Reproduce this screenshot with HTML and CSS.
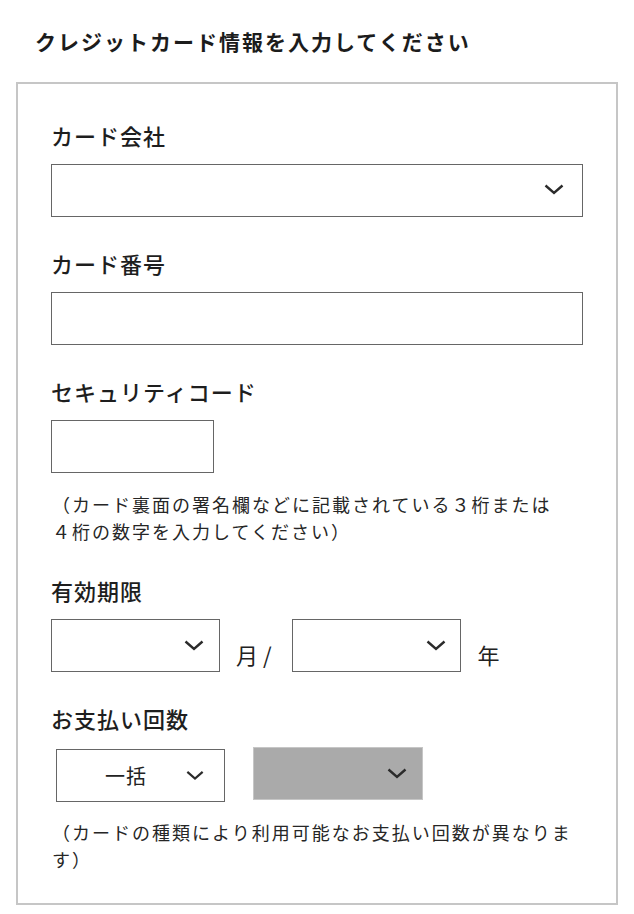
FILE: index.html
```html
<!DOCTYPE html>
<html lang="ja">
<head>
<meta charset="utf-8">
<title>クレジットカード情報</title>
<link rel="stylesheet" href="styles.css">
</head>
<body>
<div class="page">
  <h1 class="title">クレジットカード情報を入力してください</h1>
  <div class="card">
    <div class="field first">
      <div class="label">カード会社</div>
      <div class="select full">
        <svg class="chev chev-full" viewBox="0 0 20 11" width="20" height="11"><polyline points="1.5,1.5 10,9 18.5,1.5"/></svg>
      </div>
    </div>

    <div class="field">
      <div class="label">カード番号</div>
      <div class="input full"></div>
    </div>

    <div class="field">
      <div class="label">セキュリティコード</div>
      <div class="input short"></div>
      <p class="note">（カード裏面の署名欄などに記載されている３桁または<br>４桁の数字を入力してください）</p>
    </div>

    <div class="field expiry">
      <div class="label">有効期限</div>
      <div class="row">
        <div class="select mid">
          <svg class="chev" viewBox="0 0 20 11" width="20" height="11"><polyline points="1.5,1.5 10,9 18.5,1.5"/></svg>
        </div>
        <span class="unit unit-month">月 /</span>
        <div class="select mid">
          <svg class="chev chev-year" viewBox="0 0 20 11" width="20" height="11"><polyline points="1.5,1.5 10,9 18.5,1.5"/></svg>
        </div>
        <span class="unit unit-year">年</span>
      </div>
    </div>

    <div class="field payment">
      <div class="label">お支払い回数</div>
      <div class="row pay-row">
        <div class="select mid pay-once">
          <span class="value">一括</span>
          <svg class="chev chev-pay" viewBox="0 0 20 11" width="20" height="11"><polyline points="1.5,1.5 10,9 18.5,1.5"/></svg>
        </div>
        <div class="select mid disabled">
          <svg class="chev" viewBox="0 0 20 11" width="20" height="11"><polyline points="1.5,1.5 10,9 18.5,1.5"/></svg>
        </div>
      </div>
      <p class="note note-pay">（カードの種類により利用可能なお支払い回数が異なりま<br>す）</p>
    </div>
  </div>
</div>
</body>
</html>
```

FILE: styles.css
```css
* {
  box-sizing: border-box;
}

html, body {
  margin: 0;
  padding: 0;
  background: #ffffff;
}

body {
  font-family: "Noto Sans CJK JP", "Noto Sans", sans-serif;
  color: #222222;
}

.page {
  padding: 26px 16px 0 16px;
  width: 634px;
}

.title {
  margin: 0 0 26px 0;
  padding-left: 19px;
  font-size: 21px;
  line-height: 30px;
  font-weight: 700;
  letter-spacing: 2px;
  color: #1c1c1c;
}

.card {
  width: 602px;
  border: 2px solid #c6c6c6;
  padding: 36px 33px 30px 33px;
}

.field {
  margin-top: 31px;
}

.field.first {
  margin-top: 0;
}

.field.expiry {
  margin-top: 30px;
}

.label {
  font-size: 22px;
  line-height: 30px;
  font-weight: 500;
  letter-spacing: 1px;
  margin-bottom: 14px;
  color: #1e1e1e;
}

.select,
.input {
  position: relative;
  height: 53px;
  border: 1px solid #666666;
  background: #ffffff;
}

.full {
  width: 532px;
}

.short {
  width: 163px;
}

.mid {
  width: 169px;
}

.chev {
  position: absolute;
  top: 50%;
  right: 15px;
  margin-top: -6px;
  width: 20px;
  height: 11px;
}

.chev polyline {
  fill: none;
  stroke: #2b2b2b;
  stroke-width: 2.4;
  stroke-linejoin: miter;
  stroke-linecap: butt;
}

.chev-full {
  right: 18px;
  margin-top: -7px;
}

.chev-year {
  right: 14px;
}

.chev-pay {
  right: 20px;
  width: 18px;
}

.row {
  display: flex;
  align-items: flex-end;
}

.unit {
  font-size: 22px;
  line-height: 30px;
  padding-bottom: 3px;
  color: #222222;
  white-space: pre;
}

.unit-month {
  margin: 0 20px 0 16px;
}

.unit-year {
  margin-left: 17px;
}

.pay-row {
  align-items: flex-start;
  gap: 28px;
}

.pay-once {
  margin-left: 5px;
  margin-top: 2px;
  display: flex;
  align-items: center;
}

.pay-once .value {
  padding-left: 48px;
  font-size: 20px;
  line-height: 30px;
  letter-spacing: 1px;
  color: #222222;
}

.disabled {
  background: #aaaaaa;
  border-color: #c6c6c6;
  width: 170px;
}

.note {
  margin: 18px 0 0 0;
  padding-left: 1px;
  font-size: 18px;
  line-height: 27px;
  letter-spacing: 2px;
  color: #262626;
}

.note-pay {
  margin-top: 17px;
}
```
